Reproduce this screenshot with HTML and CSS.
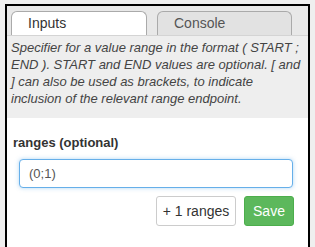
FILE: index.html
```html
<!DOCTYPE html>
<html lang="en">

<head>
    <meta charset="UTF-8">
    <meta name="viewport" content="width=device-width, initial-scale=1.0">
    <title>Ranges</title>
    <link rel="stylesheet" href="styles.css">
</head>

<body>
    <div class="panel">
        <div class="tabs">
            <div class="tab active">Inputs</div>
            <div class="tab">Console</div>
        </div>
        <div class="help">
            Specifier for a value range in the format ( START ; END ). START and END values are optional. [ and ] can also be used as brackets, to indicate inclusion of the relevant range endpoint.
        </div>
        <div class="form">
            <label class="field-label" for="ranges">ranges (optional)</label>
            <input type="text" id="ranges" class="field-input" value="(0;1)">
            <div class="actions">
                <button class="btn btn-default">+ 1 ranges</button>
                <button class="btn btn-save">Save</button>
            </div>
        </div>
    </div>
</body>

</html>
```
FILE: styles.css
```css
html,
body {
    margin: 0;
    padding: 0;
    height: 100%;
    overflow: hidden;
}

body {
    background-color: #efefef;
    font-family: 'Liberation Sans', Arial, sans-serif;
    font-size: 13px;
    padding: 4px 0 0 5px;
    box-sizing: border-box;
}

.panel {
    width: 305px;
    height: 243px;
    box-sizing: border-box;
    border: 2px solid #000;
    border-bottom: none;
    background-color: #fff;
}

.tabs {
    display: flex;
    gap: 10px;
    padding: 5px 0 0 4px;
    background-color: #e8e8e8;
    border-bottom: 1px solid #d4d4d4;
}

.tab {
    box-sizing: border-box;
    height: 24px;
    border: 1px solid #aaa;
    border-bottom: none;
    border-radius: 6px 6px 0 0;
    background-color: #e2e2e2;
    color: #555;
    font-size: 14px;
    line-height: 22px;
}

.tab.active {
    width: 136px;
    background-color: #fff;
    color: #333;
    padding-left: 16px;
}

.tab:not(.active) {
    width: 135px;
    padding-left: 16px;
}

.help {
    background-color: #eee;
    color: #444;
    font-style: italic;
    line-height: 17px;
    padding: 3px 6px 11px 4px;
}

.form {
    padding: 16px 14px 0 6px;
}

.field-label {
    display: block;
    font-weight: bold;
    color: #333;
    line-height: 17px;
    margin-bottom: 8px;
}

.field-input {
    display: block;
    box-sizing: border-box;
    width: 274px;
    height: 29px;
    margin-left: 6px;
    padding: 0 9px;
    border: 1px solid #66afe9;
    border-radius: 4px;
    box-shadow: 0 0 4px rgba(102, 175, 233, 0.5);
    font-family: 'Liberation Sans', Arial, sans-serif;
    font-size: 13px;
    color: #555;
    outline: none;
}

.actions {
    display: flex;
    justify-content: flex-end;
    gap: 8px;
    margin-top: 8px;
}

.btn {
    height: 30px;
    box-sizing: border-box;
    border-radius: 3px;
    font-family: 'Liberation Sans', Arial, sans-serif;
    font-size: 14px;
    padding: 0;
    white-space: nowrap;
    cursor: pointer;
}

.btn-default {
    width: 80px;
    background-color: #fff;
    border: 1px solid #ccc;
    color: #333;
}

.btn-save {
    width: 50px;
    background-color: #5cb85c;
    border: 1px solid #4cae4c;
    color: #fff;
}
```
